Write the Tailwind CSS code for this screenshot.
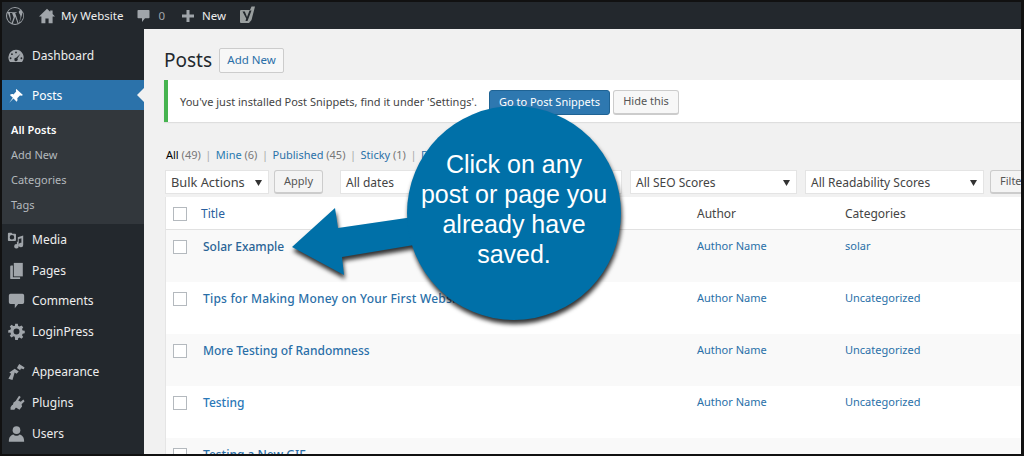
<!DOCTYPE html>
<html lang="en">
<head>
<meta charset="UTF-8">
<title>Posts</title>
<script src="https://cdn.jsdelivr.net/npm/@tailwindcss/browser@4"></script>
</head>
<body class="bg-black">
<div class="relative w-[1024px] h-[456px] overflow-hidden flex flex-col border-2 border-r-[3px] border-[#111] bg-[#f1f1f1] font-['Noto_Sans',sans-serif] text-[12px] text-[#444]">

  <!-- admin bar -->
  <div class="h-[27px] shrink-0 flex items-center bg-[#23282d] text-[#eee] text-[11.5px]">
    <svg class="ml-[3px] w-[20px] h-[20px] text-[#9ea3a8]" viewBox="0 0 20 20" fill="currentColor"><path d="M10 1a9 9 0 1 0 0 18 9 9 0 0 0 0-18zm0 1.100c2.100 0 4 .8 5.400 2.200-.9 0-1.600.8-1.600 1.700 0 .8.5 1.500 1 2.300.4.700.7 1.500.7 2.700 0 .9-.3 1.900-.8 3.300l-1 3.300-3.500-10.500c.6 0 1.100-.1 1.100-.1.500-.1.500-.8 0-.8 0 0-1.600.1-2.600.1-1 0-2.500-.1-2.500-.1-.5 0-.6.800-.1.800 0 0 .5.1 1 .1l1.500 4.100-2.100 6.400L4.900 6.800c.6 0 1.100-.1 1.100-.1.500-.1.500-.8 0-.8 0 0-1.500.1-2.500.1h-.5A7.900 7.900 0 0 1 10 2.100zM2.100 10c0-1.100.2-2.200.7-3.200l3.800 10.300A7.900 7.900 0 0 1 2.100 10zm7.900 7.900c-.8 0-1.500-.1-2.200-.3l2.400-6.900 2.400 6.700a7.800 7.800 0 0 1-2.600.5zm4.300-1.300 2.400-6.900c.4-1.100.6-2 .6-2.800v-.9A7.900 7.900 0 0 1 14.300 16.600z"/></svg>
    <svg class="ml-[14px] w-[16px] h-[16px] text-[#a0a5aa]" viewBox="0 0 20 20" fill="currentColor"><path d="M10 1 0 10.500h3V19h5v-6h4v6h5v-8.500h3l-3-2.900V3h-3v1.800z"/></svg>
    <span class="ml-[6px]">My Website</span>
    <svg class="ml-[13px] w-[15px] h-[16px] text-[#a0a5aa]" viewBox="0 0 20 20" fill="currentColor"><path d="M3 2h14a1 1 0 0 1 1 1v9a1 1 0 0 1-1 1h-5l-4 5v-5H3a1 1 0 0 1-1-1V3a1 1 0 0 1 1-1z"/></svg>
    <span class="ml-[7px] text-[#a0a5aa]">0</span>
    <svg class="ml-[16px] w-[14px] h-[14px] text-[#a0a5aa]" viewBox="0 0 14 14" fill="currentColor"><path d="M5.500 1h3v4.500H13v3H8.500V13h-3V8.500H1v-3h4.500z"/></svg>
    <span class="ml-[7px]">New</span>
    <svg class="ml-[13px] w-[16px] h-[20px]" viewBox="0 0 16 20"><path d="M1.500 4H11l1.500-3.500H16L12.500 14 10 17H2a1 1 0 0 1-1-1V5z" fill="#9a9f9f"/><path d="M3.500 5.500h2.300L8 11l2.500-6.500h2L8.500 15H6.500l.7-2.500z" fill="#23282d"/></svg>
  </div>

  <div class="flex flex-1 min-h-0">
    <!-- sidebar -->
    <div class="w-[142px] shrink-0 bg-[#23282d] text-[#eee] text-[12px]">
      <div class="h-[51px] pt-[2px] flex items-center">
        <svg class="ml-[5px] w-[18px] h-[18px] text-[#a0a5aa]" viewBox="0 0 20 20" fill="currentColor"><path d="M10 3a8.500 8.500 0 0 0-8.500 8.500c0 2 .7 3.800 1.800 5.200h13.400a8.500 8.500 0 0 0-6.700-13.700zm0 2a1 1 0 1 1 0 2 1 1 0 0 1 0-2zM5.500 7a1 1 0 1 1 0 2 1 1 0 0 1 0-2zm9.400.5-3.300 5.300a1.900 1.900 0 1 1-1.400-.8zM4 11.500a1 1 0 1 1 0 2 1 1 0 0 1 0-2zm12 0a1 1 0 1 1 0 2 1 1 0 0 1 0-2z"/></svg>
        <span class="ml-[7px]">Dashboard</span>
      </div>
      <div class="h-[30px] pt-[1px] flex items-center bg-[#2b72aa] text-white relative">
        <svg class="ml-[5px] w-[18px] h-[18px]" viewBox="0 0 20 20" fill="#fff"><path d="M10.400 2.300 17.700 9c-.8.800-2.200.8-3.300.5l-3 3c.5 1.500.3 2.800-.7 4L7.200 12.800 2.500 17.500l4-5.600-3.300-3c1.200-1 2.600-1.300 4-.7l3-3.100c-.3-1-.6-2 .2-2.800z"/></svg>
        <span class="ml-[7px]">Posts</span>
        <span class="absolute right-0 top-[8px] border-y-[7px] border-y-transparent border-r-[7px] border-r-[#f1f1f1]"></span>
      </div>
      <div class="h-[114px] bg-[#32373c] text-[11px] text-[#b4b9be] pt-[7px] pl-[9px] flex flex-col">
        <span class="h-[25px] leading-[25px] font-semibold text-white">All Posts</span>
        <span class="h-[25px] leading-[25px]">Add New</span>
        <span class="h-[25px] leading-[25px]">Categories</span>
        <span class="h-[25px] leading-[25px]">Tags</span>
      </div>
      <div class="h-[31px] mb-[1px] flex items-center">
        <svg class="ml-[5px] w-[18px] h-[18px] text-[#a0a5aa]" viewBox="0 0 20 20" fill="currentColor"><path d="M2 2h3l1 1h3a1 1 0 0 1 1 1v6a1 1 0 0 1-1 1H2a1 1 0 0 1-1-1V3a1 1 0 0 1 1-1zm3.500 2.500a2.500 2.500 0 1 0 0 5 2.500 2.500 0 0 0 0-5zM18 5v10.500a2.500 2.500 0 1 1-2-2.400V8l-3 .8V17a2.500 2.500 0 1 1-2-2.400V12h1V7z"/></svg>
        <span class="ml-[7px]">Media</span>
      </div>
      <div class="h-[29px] flex items-center">
        <svg class="ml-[6px] w-[17px] h-[18px] text-[#a0a5aa]" viewBox="0 0 18 20" fill="currentColor"><path d="M6 1h10v15H6z"/><path d="M3 4h2v13h8v2H3a1 1 0 0 1-1-1V5a1 1 0 0 1 1-1z"/></svg>
        <span class="ml-[7px]">Pages</span>
      </div>
      <div class="h-[31px] flex items-center">
        <svg class="ml-[6px] w-[17px] h-[17px] text-[#a0a5aa]" viewBox="0 0 20 20" fill="currentColor"><path d="M3 2h14a2 2 0 0 1 2 2v8a2 2 0 0 1-2 2h-5l-4 5v-5H3a2 2 0 0 1-2-2V4a2 2 0 0 1 2-2z"/></svg>
        <span class="ml-[7px]">Comments</span>
      </div>
      <div class="h-[31px] flex items-center">
        <svg class="ml-[6px] w-[17px] h-[17px] text-[#a0a5aa]" viewBox="0 0 20 20" fill="currentColor"><path d="M8.500 1h3l.5 2.500 1.700.7 2.100-1.400 2.100 2.100-1.400 2.100.7 1.700 2.500.5v3l-2.500.5-.7 1.700 1.400 2.100-2.100 2.100-2.100-1.400-1.700.7-.5 2.500h-3L8 16.300l-1.700-.7-2.100 1.400-2.100-2.100 1.400-2.100-.7-1.700L.3 11.500v-3l2.500-.5.7-1.700L2.100 4.200l2.100-2.100 2.100 1.400L8 3.500zM10 6.500a3.500 3.500 0 1 0 0 7 3.500 3.500 0 0 0 0-7z"/></svg>
        <span class="ml-[7px]">LoginPress</span>
      </div>
      <div class="h-[31px] mt-[9px] flex items-center">
        <svg class="ml-[5px] w-[19px] h-[18px] text-[#a0a5aa]" viewBox="0 0 20 20" fill="currentColor"><path d="M13 1l6 4-1 2-3-1-1 2-3.500-2.500 1-2zM8 6.500l4.500 3L10 12 8 10.500 5.500 19 1 17.500 4 12l-2-1.500z"/></svg>
        <span class="ml-[6px]">Appearance</span>
      </div>
      <div class="h-[31px] flex items-center">
        <svg class="ml-[6px] w-[17px] h-[18px] text-[#a0a5aa]" viewBox="0 0 20 20" fill="currentColor"><path d="M13 1.500l2 1.500-3 4 3 1.500 3-2.500 1.500 2-3.500 3.500.5 2.500-3 4-8-5 1-3.500 2.500-2zM5 12l4.500 3-2 3H3v-3z"/></svg>
        <span class="ml-[7px]">Plugins</span>
      </div>
      <div class="h-[31px] flex items-center">
        <svg class="ml-[6px] w-[17px] h-[18px] text-[#a0a5aa]" viewBox="0 0 20 20" fill="currentColor"><circle cx="10" cy="5.500" r="4.500"/><path d="M6.500 10.500C3 11.500 1 13.500 1 19h18c0-5.500-2-7.500-5.500-8.500C12.500 11.800 11.300 12 10 12s-2.500-.2-3.500-1.500z"/></svg>
        <span class="ml-[7px]">Users</span>
      </div>
    </div>

    <!-- content -->
    <div class="flex-1 min-w-0 pl-[20px] overflow-hidden">
      <div class="h-[51px] flex items-center pt-[11px]">
        <h1 class="text-[19px] text-[#23282d]">Posts</h1>
        <span class="ml-[7px] h-[25px] w-[65px] flex items-center justify-center border border-[#ccc] bg-[#f7f7f7] rounded-[2px] text-[#2a6fa8] text-[11.500px]">Add New</span>
      </div>

      <div class="h-[42px] pt-[2px] flex items-center border-l-4 border-[#46b450] bg-white shadow-[0_1px_1px_rgba(0,0,0,0.08)] pl-[12px] text-[11px]">
        <span class="w-[297px] whitespace-nowrap">You've just installed Post Snippets, find it under 'Settings'.</span>
        <span class="ml-[12px] h-[25px] w-[121px] flex items-center justify-center bg-[#2e78b0] border border-[#1f6394] rounded-[3px] text-white">Go to Post Snippets</span>
        <span class="ml-[3px] h-[25px] w-[66px] flex items-center justify-center bg-[#f7f7f7] border border-[#ccc] border-b-2 rounded-[3px] text-[#555]">Hide this</span>
      </div>

      <div class="mt-[23px] ml-[2px] h-[20px] flex items-center text-[11px] text-[#777] gap-[4.500px] whitespace-nowrap">
        <span class="text-black">All <span class="text-[#777]">(49)</span></span><span class="text-[#aaa]">|</span>
        <span class="text-[#2a7bb0]">Mine <span class="text-[#777]">(6)</span></span><span class="text-[#aaa]">|</span>
        <span class="text-[#2a70a8]">Published <span class="text-[#777]">(45)</span></span><span class="text-[#aaa]">|</span>
        <span class="text-[#2a70a8]">Sticky <span class="text-[#777]">(1)</span></span><span class="text-[#aaa]">|</span>
        <span class="text-[#2a70a8]">Drafts <span class="text-[#777]">(3)</span></span><span class="text-[#aaa]">|</span>
        <span class="text-[#2a70a8]">Trash <span class="text-[#777]">(1)</span></span>
      </div>

      <div class="mt-[5px] h-[24px] flex items-center text-[12px] whitespace-nowrap">
        <div class="shrink-0 ml-[1px] w-[104px] h-[24px] pt-[1px] px-[5px] flex items-center justify-between bg-white border border-[#e4e4e4]">
          <span class="text-[12.800px]">Bulk Actions</span><svg class="w-[7px] h-[6px] mr-[1px]" viewBox="0 0 7 6"><path d="M0 0h7L3.500 6z" fill="#333"/></svg>
        </div>
        <div class="shrink-0 ml-[5px] w-[49px] h-[24px] flex items-center justify-center bg-[#f4f4f4] border border-[#ccc] border-b-2 rounded-[3px] text-[11px] text-[#555]">Apply</div>
        <div class="shrink-0 ml-[17px] w-[282px] h-[24px] pt-[1px] px-[5px] flex items-center justify-between bg-white border border-[#e4e4e4]">
          <span>All dates</span><svg class="w-[7px] h-[6px] mr-[1px]" viewBox="0 0 7 6"><path d="M0 0h7L3.500 6z" fill="#333"/></svg>
        </div>
        <div class="shrink-0 ml-[8px] w-[167px] h-[24px] pt-[1px] px-[5px] flex items-center justify-between bg-white border border-[#e4e4e4]">
          <span>All SEO Scores</span><svg class="w-[7px] h-[6px] mr-[1px]" viewBox="0 0 7 6"><path d="M0 0h7L3.500 6z" fill="#333"/></svg>
        </div>
        <div class="shrink-0 ml-[8px] w-[179px] h-[24px] pt-[1px] px-[5px] flex items-center justify-between bg-white border border-[#e4e4e4]">
          <span>All Readability Scores</span><svg class="w-[7px] h-[6px] mr-[1px]" viewBox="0 0 7 6"><path d="M0 0h7L3.500 6z" fill="#333"/></svg>
        </div>
        <div class="shrink-0 ml-[6px] w-[50px] h-[24px] pl-[9px] flex items-center bg-[#f4f4f4] border border-[#ccc] border-b-2 rounded-[3px] text-[11px] text-[#555]">Filter</div>
      </div>

      <!-- table -->
      <div class="mt-[3px] ml-[1px] border-l border-[#e5e5e5] text-[11px]">
        <div class="h-[33px] pt-[1px] flex items-center bg-white border-b border-[#e1e1e1] text-[12px]">
          <span class="ml-[7px] w-[14px] h-[14px] border border-[#b4b9be] bg-white"></span>
          <span class="ml-[14px] w-[496px] text-[#2a5f9e]">Title</span>
          <span class="w-[148px] text-[#444]">Author</span>
          <span class="text-[#444]">Categories</span>
        </div>
        <div class="h-[52px] pt-[9px] flex items-start bg-[#f9f9f9]">
          <span class="ml-[7px] mt-[1px] w-[14px] h-[14px] border border-[#b4b9be] bg-white"></span>
          <span class="ml-[16px] w-[494px] text-[12px] leading-[16px] font-medium text-[#2a6496]">Solar Example</span>
          <span class="w-[148px] leading-[14px] text-[#2a70a8]">Author Name</span>
          <span class="leading-[14px] text-[#2a70a8]">solar</span>
        </div>
        <div class="h-[52px] pt-[9px] flex items-start bg-white">
          <span class="ml-[7px] mt-[1px] w-[14px] h-[14px] border border-[#b4b9be] bg-white"></span>
          <span class="ml-[16px] w-[494px] text-[12px] leading-[16px] font-medium tracking-[0.2px] text-[#2a6fa8]">Tips for Making Money on Your First Website</span>
          <span class="w-[148px] leading-[14px] text-[#2a70a8]">Author Name</span>
          <span class="leading-[14px] text-[#2a70a8]">Uncategorized</span>
        </div>
        <div class="h-[52px] pt-[9px] flex items-start bg-[#f9f9f9]">
          <span class="ml-[7px] mt-[1px] w-[14px] h-[14px] border border-[#b4b9be] bg-white"></span>
          <span class="ml-[16px] w-[494px] text-[12px] leading-[16px] font-medium text-[#2a6fa8]">More Testing of Randomness</span>
          <span class="w-[148px] leading-[14px] text-[#2a70a8]">Author Name</span>
          <span class="leading-[14px] text-[#2a70a8]">Uncategorized</span>
        </div>
        <div class="h-[52px] pt-[9px] flex items-start bg-white">
          <span class="ml-[7px] mt-[1px] w-[14px] h-[14px] border border-[#b4b9be] bg-white"></span>
          <span class="ml-[16px] w-[494px] text-[12px] leading-[16px] font-medium text-[#2a78b8]">Testing</span>
          <span class="w-[148px] leading-[14px] text-[#2a70a8]">Author Name</span>
          <span class="leading-[14px] text-[#2a70a8]">Uncategorized</span>
        </div>
        <div class="h-[52px] pt-[9px] flex items-start bg-[#f9f9f9]">
          <span class="ml-[7px] mt-[1px] w-[14px] h-[14px] border border-[#b4b9be] bg-white"></span>
          <span class="ml-[16px] w-[494px] text-[12px] leading-[16px] font-medium text-[#2a6fa8]">Testing a New GIF</span>
        </div>
      </div>
    </div>
  </div>

  <!-- callout laid over the page -->
  <svg class="absolute left-[-2px] top-[-2px] w-[1024px] h-[456px] drop-shadow-[1px_4px_2px_rgba(0,0,0,0.8)]" viewBox="0 0 1024 456">
    <path d="M292 247 335 208 338 228 420 216 420 244 342 257 344 275z" fill="#0070a8"/>
    <circle cx="514" cy="213" r="107" fill="#0070a8"/>
  </svg>
  <div class="absolute left-[405px] top-[147px] w-[214px] text-center text-white font-['Liberation_Sans',sans-serif] text-[25px] leading-[30px]">Click on any<br>post or page you<br>already have<br>saved.</div>
</div>
</body>
</html>
